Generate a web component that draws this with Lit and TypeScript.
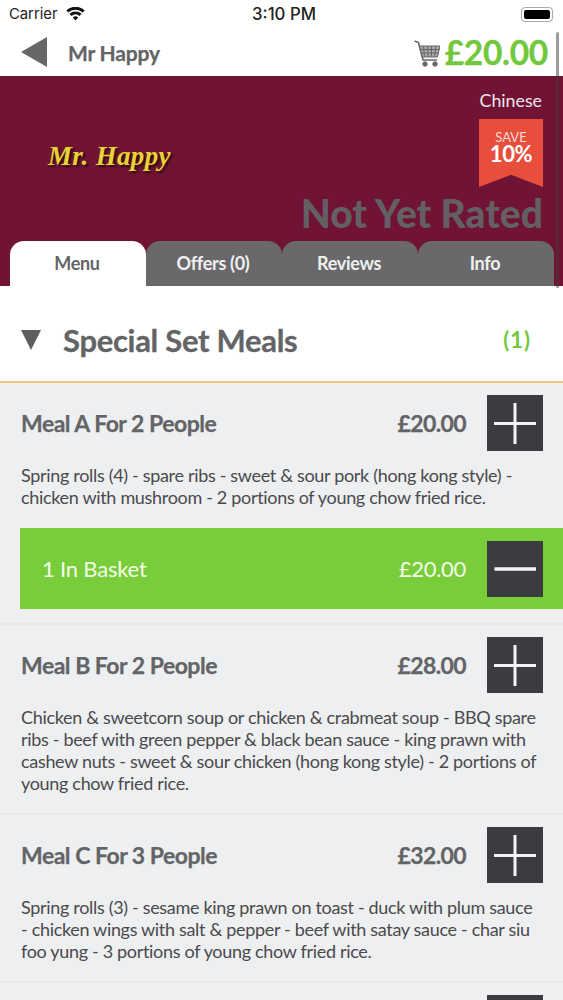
import { LitElement, html, css, svg } from "lit";
import { customElement } from "lit/decorators.js";

const plus = svg`<svg viewBox="0 0 56 56" width="56" height="56"><path d="M7 28.500H49M28 8V49" stroke="#f4f4f4" stroke-width="3" fill="none"/></svg>`;
const minus = svg`<svg viewBox="0 0 56 56" width="56" height="56"><path d="M7.500 28H49" stroke="#f4f4f4" stroke-width="3.500" fill="none"/></svg>`;

@customElement("app-root")
export class AppRoot extends LitElement {
  static styles = css`
    :host { display: block; width: 563px; height: 1000px; overflow: hidden; position: relative; background: #eeeff1; font-family: Lato, "Open Sans", sans-serif; color: #636466; }
    .status { height: 28px; padding: 0 10px 0 9px; background: #fff; display: grid; grid-template-columns: 1fr auto 1fr; align-items: center; font-family: Inter, "Liberation Sans", sans-serif; font-size: 15px; color: #222; }
    .status .l { display: flex; align-items: center; gap: 8px; font-size: 14.800px; }
    .status .r { display: flex; justify-content: flex-end; }
    .status .time { font-size: 16.800px; font-weight: 500; margin-left: 6px; }
    .batt { width: 32px; height: 15px; border: 1px solid #aaa; border-radius: 4px; padding: 2px; box-sizing: border-box; }
    .batt i { display: block; height: 100%; background: #000; border-radius: 2px; }
    .nav { height: 48px; background: #fff; display: flex; align-items: center; padding: 0 15px 0 21px; }
    .back { width: 0; height: 0; border-top: 15px solid transparent; border-bottom: 15px solid transparent; border-right: 26px solid #666; margin-right: 21px; }
    .nav .name { font-size: 21px; font-weight: 700; flex: 1; letter-spacing: -0.2px; -webkit-text-stroke: 0.25px #636466; }
    .nav svg { margin-right: 5px; margin-top: 3px; }
    .total { font-size: 33.500px; font-weight: 700; color: #72c83c; letter-spacing: -0.3px; -webkit-text-stroke: 0.3px #72c83c; }
    .banner { height: 210px; background: #701335; position: relative; box-sizing: border-box; display: flex; flex-direction: column; justify-content: flex-end; }
    .cuisine { position: absolute; top: 13px; right: 21px; font-size: 17.800px; color: #f0e4ea; }
    .ribbon { position: absolute; left: 479px; top: 43px; width: 64px; height: 68px; background: #e84e3c; clip-path: polygon(0 0, 100% 0, 100% 100%, 50% 82%, 0 100%); display: flex; flex-direction: column; align-items: center; color: #fff; padding-top: 12px; box-sizing: border-box; }
    .ribbon .s { font-size: 13px; line-height: 13px; color: #fbdcd6; }
    .ribbon .p { font-size: 22px; line-height: 19px; font-weight: 700; letter-spacing: -0.3px; }
    .logo { position: absolute; left: 48px; top: 65px; font-family: "Liberation Serif", serif; font-style: italic; font-weight: 700; font-size: 27px; color: #e6d335; text-shadow: 2px 2px 2px #2c0a10; letter-spacing: 0.3px; }
    .rated { position: absolute; right: 20px; top: 113px; font-size: 39px; line-height: 48px; font-weight: 900; color: #635f63; }
    .tabs { display: grid; grid-template-columns: repeat(4, 136px); padding-left: 10px; height: 45px; }
    .tab { background: #69696b; color: #f0f0f0; border-radius: 14px 14px 0 0; display: flex; align-items: center; justify-content: center; font-size: 18px; font-weight: 700; letter-spacing: -0.3px; padding: 0 2px 2px 0; box-sizing: border-box; }
    .tab.on { background: #fff; color: #636466; }
    .sec { height: 95px; background: #fff; border-bottom: 2px solid #f2c879; display: flex; align-items: center; padding: 0 32px 0 21px; box-sizing: content-box; }
    .tri { width: 0; height: 0; border-left: 10.500px solid transparent; border-right: 10.500px solid transparent; border-top: 20px solid #5e5e60; margin: 44px 22px 0 0; align-self: flex-start; }
    .sec h2 { margin: 12px 0 0; flex: 1; font-size: 31px; font-weight: 700; letter-spacing: -0.3px; -webkit-text-stroke: 0.3px #636466; }
    .count { color: #72c83c; font-size: 22px; font-weight: 700; letter-spacing: 1px; margin-top: 11px; }
    .row { padding: 12px 20px 0 21px; border-bottom: 2px solid #e8e9eb; }
    .head { display: flex; align-items: center; height: 56px; }
    .head .t { flex: 1; font-size: 23px; font-weight: 700; letter-spacing: -0.5px; -webkit-text-stroke: 0.25px #636466; }
    .head .pr { font-size: 23px; font-weight: 700; margin-right: 21px; letter-spacing: -0.6px; -webkit-text-stroke: 0.25px #636466; }
    .btn { width: 56px; height: 56px; background: #3b3c3f; flex: none; }
    .desc { margin: 13px 0 0; font-size: 18px; line-height: 22px; color: #4a4a4c; letter-spacing: -0.32px; }
    .pad { height: 19px; }
    .basket { background: #79cd3a; height: 81px; margin: 20px -20px 14px -1px; display: flex; align-items: center; color: #f3fbe9; font-size: 22px; padding: 0 20px 0 22px; }
    .basket .b { flex: 1; letter-spacing: -0.2px; }
    .basket .pr { margin-right: 21px; letter-spacing: -0.3px; }
    .scroll { position: absolute; left: 556px; top: 32px; width: 3px; height: 256px; background: rgba(60, 60, 60, 0.5); border-radius: 2px; }
  `;

  row(title: string, price: string, desc: unknown, basket = false) {
    return html`<div class="row">
      <div class="head"><div class="t">${title}</div><div class="pr">${price}</div><div class="btn">${plus}</div></div>
      <p class="desc">${desc}</p>
      ${basket
        ? html`<div class="basket"><div class="b">1 In Basket</div><div class="pr">${price}</div><div class="btn">${minus}</div></div>`
        : html`<div class="pad"></div>`}
    </div>`;
  }

  render() {
    return html`
      <div class="status">
        <div class="l">Carrier
          <svg width="19" height="14" viewBox="0 0 19 14"><path d="M9.500 13.500 6.800 10.400a4 4 0 0 1 5.400 0ZM5.500 9 3.400 6.700a9.200 9.200 0 0 1 12.200 0L13.500 9a6.200 6.200 0 0 0-8 0ZM2.200 5.400 .3 3.200a14 14 0 0 1 18.400 0L16.800 5.400a11.200 11.200 0 0 0-14.600 0Z" fill="#111"/></svg>
        </div>
        <div class="time">3:10 PM</div>
        <div class="r"><div class="batt"><i></i></div></div>
      </div>
      <div class="nav">
        <div class="back"></div>
        <div class="name">Mr Happy</div>
        <svg width="26" height="27" viewBox="0 0 26 27" fill="none" stroke="#666" stroke-width="1"><path d="M0.500 1 4.500 2.500 9 20H23" stroke-width="1.600"/><path d="M5.500 6H26L23.500 17H8.500Z" fill="#aaa"/><path d="M9.500 6 10.500 17M14 6V17M17.500 6V17M22 6 20.500 17M6.500 9.500H25M7.500 13H24.500"/><circle cx="11" cy="24" r="2.200" fill="#666"/><circle cx="21" cy="24" r="2.200" fill="#666"/></svg>
        <div class="total">£20.00</div>
      </div>
      <div class="banner">
        <div class="cuisine">Chinese</div>
        <div class="logo">Mr. Happy</div>
        <div class="ribbon"><div class="s">SAVE</div><div class="p">10%</div></div>
        <div class="rated">Not Yet Rated</div>
        <div class="tabs">
          <div class="tab on">Menu</div><div class="tab">Offers (0)</div><div class="tab">Reviews</div><div class="tab">Info</div>
        </div>
      </div>
      <div class="sec"><div class="tri"></div><h2>Special Set Meals</h2><div class="count">(1)</div></div>
      ${this.row("Meal A For 2 People", "£20.00", html`Spring rolls (4) - spare ribs - sweet &amp; sour pork (hong kong style) -<br>chicken with mushroom - 2 portions of young chow fried rice.`, true)}
      ${this.row("Meal B For 2 People", "£28.00", html`Chicken &amp; sweetcorn soup or chicken &amp; crabmeat soup - BBQ spare<br>ribs - beef with green pepper &amp; black bean sauce - king prawn with<br>cashew nuts - sweet &amp; sour chicken (hong kong style) - 2 portions of<br>young chow fried rice.`)}
      ${this.row("Meal C For 3 People", "£32.00", html`Spring rolls (3) - sesame king prawn on toast - duck with plum sauce<br>- chicken wings with salt &amp; pepper - beef with satay sauce - char siu<br>foo yung - 3 portions of young chow fried rice.`)}
      <div class="row"><div class="head"><div class="t"></div><div class="btn"></div></div></div>
      <div class="scroll"></div>
    `;
  }
}
